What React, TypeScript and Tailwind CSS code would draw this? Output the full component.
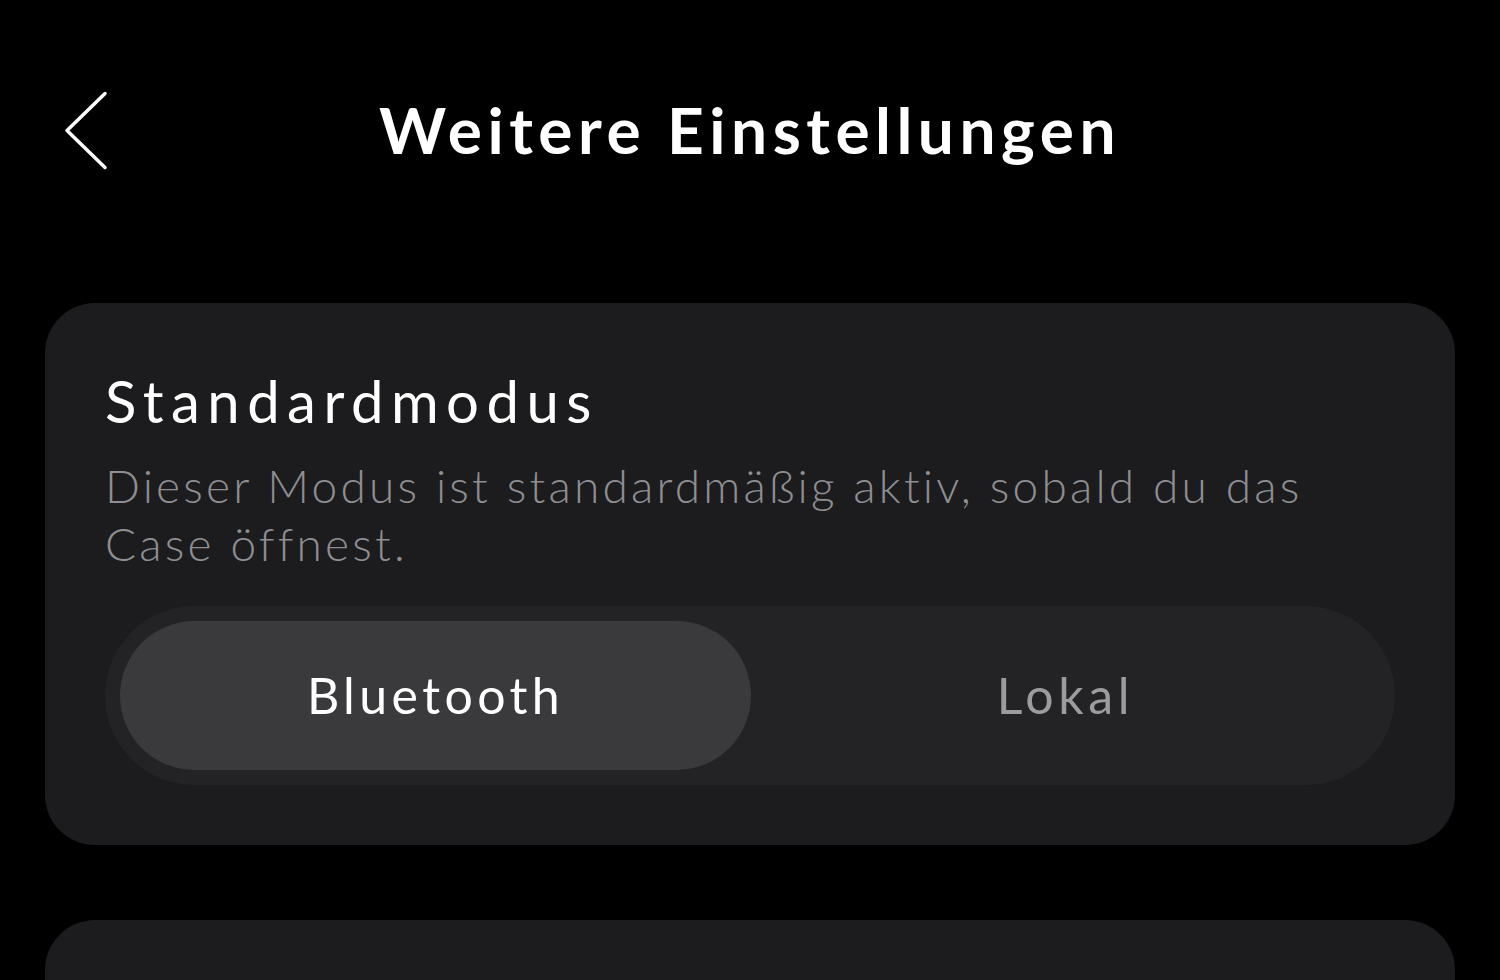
import React from "react";

export default function App() {
  return (
    <div className="w-[1500px] h-[980px] bg-black overflow-hidden text-white" style={{ fontFamily: "Lato, 'Noto Sans', sans-serif" }}>
      <div className="relative h-[260px] flex items-start justify-center pt-[88px]">
        <svg className="absolute left-[63px] top-[91px]" width="46" height="79" viewBox="0 0 46 79" fill="none">
          <path d="M42 2.5 L4 39.5 L42 76.5" stroke="white" strokeWidth="3.5" strokeLinecap="round" strokeLinejoin="round" />
        </svg>
        <h1 className="text-[64px] font-bold leading-[84px] tracking-[5.5px]">Weitere Einstellungen</h1>
      </div>
      <div className="mx-[45px] mt-[43px] rounded-[50px] bg-[#1c1c1e] px-[60px] pt-[62px] pb-[60px]">
        <h2 className="text-[58px] leading-[72px] font-normal tracking-[7.5px]">Standardmodus</h2>
        <p className="mt-[20px] text-[46px] leading-[58px] text-[#8e8e93] font-light tracking-[3.2px]">
          Dieser Modus ist standardmäßig aktiv, sobald du das Case öffnest.
        </p>
        <div className="mt-[33px] flex h-[179px] rounded-full bg-[#232325] p-[15px]">
          <div className="flex w-[631px] items-center justify-center rounded-full bg-[#3a3a3c] text-[50px] text-white tracking-[4.4px]">
            Bluetooth
          </div>
          <div className="flex flex-1 items-center justify-center text-[50px] text-[#9c9ca0] tracking-[4.6px]">Lokal</div>
        </div>
      </div>
      <div className="mx-[45px] mt-[75px] h-[200px] rounded-[50px] bg-[#1c1c1e]" />
    </div>
  );
}
